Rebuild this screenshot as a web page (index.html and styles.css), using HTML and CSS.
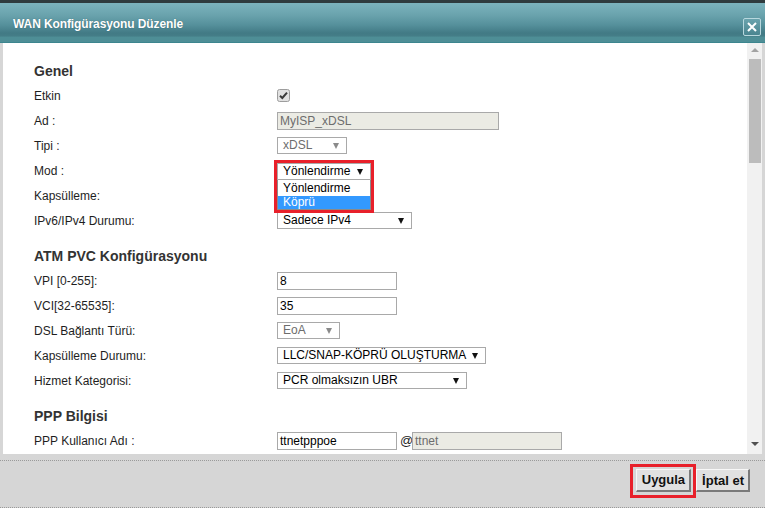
FILE: index.html
```html
<!DOCTYPE html>
<html lang="tr">
<head>
    <meta charset="UTF-8">
    <title>WAN Konfigürasyonu Düzenle</title>
    <link rel="stylesheet" href="styles.css">
</head>
<body>
    <div class="dialog">
        <div class="titlebar">
            <span class="title">WAN Konfigürasyonu Düzenle</span>
            <button class="close-btn" title="Kapat">
                <svg width="12" height="12" viewBox="0 0 12 12">
                    <path d="M2 2 L10 10 M10 2 L2 10" stroke="#fff" stroke-width="2" fill="none"/>
                </svg>
            </button>
        </div>

        <div class="dialog-body">
            <div class="content">
                <div class="section-title">Genel</div>
                <div class="row">
                    <div class="label">Etkin</div>
                    <span class="checkbox">
                        <svg width="13" height="13" viewBox="0 0 13 13">
                            <rect x="0.5" y="0.5" width="12" height="12" rx="2" fill="#e1e1e1" stroke="#9d9d9d"/>
                            <path d="M3 6.8 L5.3 9 L10 3.6" stroke="#3a3a3a" stroke-width="2" fill="none"/>
                        </svg>
                    </span>
                </div>
                <div class="row">
                    <div class="label">Ad :</div>
                    <div class="input disabled w-ad">MyISP_xDSL</div>
                </div>
                <div class="row">
                    <div class="label">Tipi :</div>
                    <div class="select disabled w-tipi"><span>xDSL</span><i class="arrow"></i></div>
                </div>
                <div class="row">
                    <div class="label">Mod :</div>
                    <div class="mod-wrap">
                        <div class="select w-mod"><span>Yönlendirme</span><i class="arrow"></i></div>
                        <div class="dropdown">
                            <div class="option">Yönlendirme</div>
                            <div class="option selected">Köprü</div>
                        </div>
                        <div class="highlight"></div>
                    </div>
                </div>
                <div class="row">
                    <div class="label">Kapsülleme:</div>
                </div>
                <div class="row">
                    <div class="label">IPv6/IPv4 Durumu:</div>
                    <div class="select w-ip"><span>Sadece IPv4</span><i class="arrow"></i></div>
                </div>

                <div class="section-title spaced">ATM PVC Konfigürasyonu</div>
                <div class="row">
                    <div class="label">VPI [0-255]:</div>
                    <div class="input w-short">8</div>
                </div>
                <div class="row">
                    <div class="label">VCI[32-65535]:</div>
                    <div class="input w-short">35</div>
                </div>
                <div class="row">
                    <div class="label">DSL Bağlantı Türü:</div>
                    <div class="select disabled w-eoa"><span>EoA</span><i class="arrow"></i></div>
                </div>
                <div class="row">
                    <div class="label">Kapsülleme Durumu:</div>
                    <div class="select w-llc"><span>LLC/SNAP-KÖPRÜ OLUŞTURMA</span><i class="arrow"></i></div>
                </div>
                <div class="row">
                    <div class="label">Hizmet Kategorisi:</div>
                    <div class="select w-pcr"><span>PCR olmaksızın UBR</span><i class="arrow"></i></div>
                </div>

                <div class="section-title spaced">PPP Bilgisi</div>
                <div class="row">
                    <div class="label">PPP Kullanıcı Adı :</div>
                    <div class="input w-short">ttnetpppoe</div>
                    <span class="at">@</span>
                    <div class="input disabled w-domain">ttnet</div>
                </div>
            </div>

            <div class="scrollbar">
                <div class="sb-btn"><i class="sb-up"></i></div>
                <div class="sb-thumb"></div>
                <div class="sb-space"></div>
                <div class="sb-btn bottom"><i class="sb-down"></i></div>
            </div>
        </div>

        <div class="footer">
            <div class="footer-inner">
                <div class="btn-frame">
                    <button class="btn">Uygula</button>
                </div>
                <button class="btn">İptal et</button>
            </div>
        </div>
    </div>
</body>
</html>
```

FILE: styles.css
```css
* {
    margin: 0;
    padding: 0;
    box-sizing: border-box;
}

body {
    font-family: "Liberation Sans", Arial, sans-serif;
    font-size: 12px;
    color: #1e1e1e;
    width: 765px;
    height: 508px;
    overflow: hidden;
    background: #d6d6d6;
}

.dialog {
    display: flex;
    flex-direction: column;
    height: 508px;
}

/* title bar */
.titlebar {
    height: 43px;
    flex: none;
    display: flex;
    align-items: center;
    justify-content: space-between;
    padding: 0 4px 0 13px;
    border-top: 3px solid #2f3b3e;
    background: linear-gradient(#7cb3bd 0%, #6aa3ad 30%, #55909b 55%, #427a85 75%, #447d87 82%, #4e8e96 86%, #4e8e96 97%, #2f7f89 100%);
}

.title {
    color: #fff;
    font-weight: bold;
    font-size: 12px;
    letter-spacing: -0.1px;
    text-shadow: 0 0 1px rgba(30, 60, 70, 0.6);
    margin-top: 2px;
}

.close-btn {
    width: 18px;
    height: 18px;
    border: 1px solid #b8d8de;
    border-radius: 2px;
    background: linear-gradient(#6aa3ad, #4a8590);
    display: flex;
    align-items: center;
    justify-content: center;
    margin-top: 8px;
}

/* body */
.dialog-body {
    height: 411px;
    flex: none;
    display: flex;
    border-left: 3px solid #d6d6d6;
    border-right: 3px solid #d6d6d6;
    background: #fff;
}

.content {
    flex: 1;
    overflow: hidden;
    padding: 20px 0 0 31px;
}

.section-title {
    font-size: 14px;
    font-weight: bold;
    line-height: 17px;
    height: 17px;
    color: #333;
    margin-bottom: 3px;
}

.section-title.spaced {
    margin-top: 15px;
}

.row {
    display: flex;
    align-items: center;
    height: 25px;
}

.label {
    width: 243px;
    flex: none;
    line-height: 14px;
}

.checkbox {
    display: flex;
    margin-top: -1px;
}

.input {
    height: 18px;
    border: 1px solid #a9a9a9;
    padding: 0 2px;
    line-height: 16px;
    color: #000;
    background: #fff;
    white-space: nowrap;
    overflow: hidden;
}

.input.disabled {
    background: #ebebe4;
    color: #6d6d6d;
}

.select {
    height: 17px;
    border: 1px solid #a9a9a9;
    background: #fff;
    display: flex;
    align-items: center;
    justify-content: space-between;
    padding: 0 7px 0 5px;
    line-height: 15px;
    color: #000;
    white-space: nowrap;
}

.select.disabled {
    color: #6d6d6d;
}

.arrow {
    width: 0;
    height: 0;
    border-left: 3.5px solid transparent;
    border-right: 3.5px solid transparent;
    border-top: 6px solid #111;
    margin-left: 6px;
}

.select.disabled .arrow {
    border-top-color: #8a8a8a;
}

.w-ad { width: 222px; }
.w-tipi { width: 70px; }
.w-mod { width: 94px; }
.w-ip { width: 135px; }
.w-short { width: 120px; }
.w-eoa { width: 63px; }
.w-llc { width: 209px; }
.w-pcr { width: 190px; }
.w-domain { width: 150px; }

.at {
    margin: 0 0 0 3px;
    width: 12px;
    font-size: 13px;
}

/* open dropdown for Mod */
.mod-wrap {
    position: relative;
    margin-top: 2px;
}

.dropdown {
    position: absolute;
    top: 100%;
    left: 0;
    width: 94px;
    background: #fff;
    border: 1px solid #8a8a8a;
    border-top: none;
    z-index: 5;
}

.option {
    height: 16px;
    line-height: 16px;
    padding-left: 5px;
    color: #000;
}

.option.selected {
    height: 13px;
    line-height: 13px;
    background: #3399ff;
    color: #fff;
}

.highlight {
    position: absolute;
    top: -3px;
    left: -3px;
    width: 100px;
    height: 53px;
    border: 3px solid #e8202a;
    z-index: 6;
}

/* scrollbar */
.scrollbar {
    width: 15px;
    flex: none;
    background: #f1f1f1;
    display: flex;
    flex-direction: column;
}

.sb-btn {
    height: 16px;
    display: flex;
    align-items: center;
    justify-content: center;
}

.sb-btn.bottom {
    align-items: flex-start;
    padding-top: 4px;
    height: 16px;
}

.sb-up {
    width: 0;
    height: 0;
    border-left: 4px solid transparent;
    border-right: 4px solid transparent;
    border-bottom: 4px solid #a3a3a3;
    margin-bottom: 2px;
}

.sb-down {
    width: 0;
    height: 0;
    border-left: 4px solid transparent;
    border-right: 4px solid transparent;
    border-top: 4px solid #505050;
}

.sb-thumb {
    height: 104px;
    margin: 0 1px 0 2px;
    background: #bcbcbc;
}

.sb-space {
    flex: 1;
}

/* footer */
.footer {
    flex: 1;
    padding-top: 6px;
    background: #d6d6d6;
}

.footer-inner {
    height: 48px;
    border-top: 1px dotted #9a9a9a;
    border-bottom: 1px dotted #9a9a9a;
    display: flex;
    justify-content: flex-end;
    align-items: center;
    padding: 0 15px 7px 0;
}

.btn-frame {
    border: 3px solid #e8202a;
    padding: 2px 2px 3px 3px;
    display: flex;
}

.btn {
    height: 23px;
    padding: 0 4px 0 5px;
    font-family: "Liberation Sans", Arial, sans-serif;
    font-size: 13px;
    font-weight: bold;
    color: #111;
    background: #e1e1e1;
    border-top: 1px solid #f7f7f7;
    border-left: 1px solid #f7f7f7;
    border-right: 2px solid #7a7a7a;
    border-bottom: 2px solid #7a7a7a;
}
```
